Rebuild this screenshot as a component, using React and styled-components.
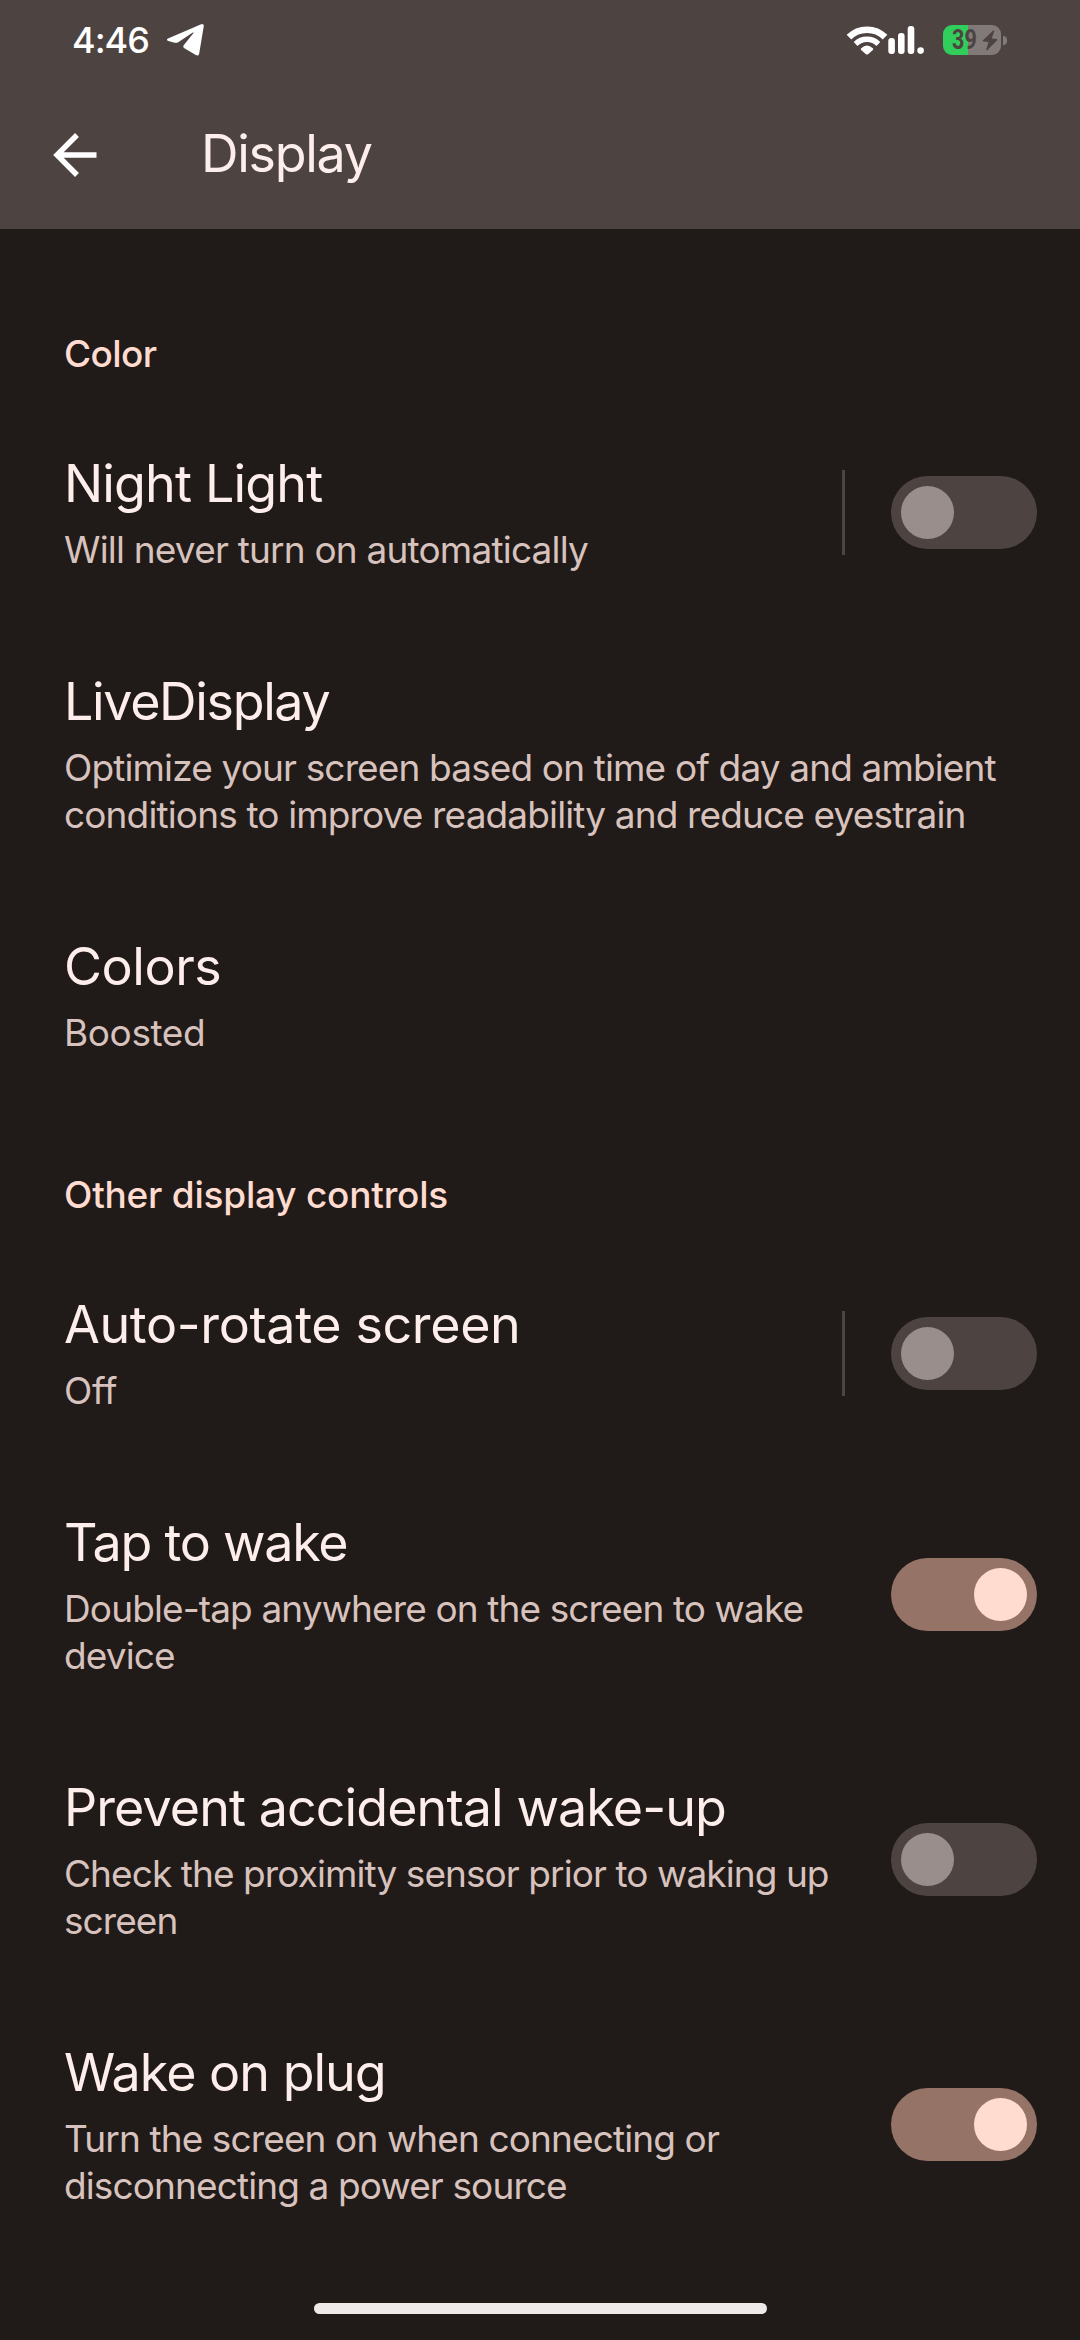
import React from 'react';
import styled, { createGlobalStyle } from 'styled-components';

const color = {
  background: '#201a18',
  bar: '#4d4442',
  text: '#fdeeeb',
  summary: '#d8c2bd',
  accent: '#ffdbd0',
  trackOn: '#957467',
  knobOff: '#998e8c',
};

const GlobalStyle = createGlobalStyle`
  *, *::before, *::after { box-sizing: border-box; }
  body {
    margin: 0;
    background: ${color.background};
    font-family: Inter, Roboto, "Liberation Sans", sans-serif;
  }
`;

const Screen = styled.div`
  display: flex;
  flex-direction: column;
  width: 1080px;
  height: 2340px;
  overflow: hidden;
  background: ${color.background};
  color: ${color.text};
`;

const Header = styled.header`
  display: flex;
  flex-direction: column;
  flex: none;
  height: 229px;
  background: ${color.bar};
`;

const StatusBar = styled.div`
  display: flex;
  align-items: center;
  justify-content: space-between;
  height: 80px;
  padding: 0 73px 0 72px;
  color: #fff;
`;

const StatusGroup = styled.div`
  display: flex;
  align-items: center;
  gap: ${(p) => p.$gap}px;
`;

const Clock = styled.span`
  font-size: 36px;
  font-weight: 500;
  line-height: 78px;
  letter-spacing: -1px;
`;

const Glyph = styled.svg`
  display: block;
  flex: none;
  fill: currentColor;
`;

const Battery = styled.div`
  display: flex;
  align-items: center;
  gap: 2px;
`;

const BatteryBody = styled.div`
  display: flex;
  align-items: center;
  justify-content: space-between;
  width: 58px;
  height: 30px;
  padding: 0 3px 0 9px;
  border-radius: 9px;
  background: linear-gradient(to right, #32ce5b 25px, #827a78 25px);
  color: ${color.bar};
`;

const BatteryLevel = styled.span`
  width: 24px;
  font-family: Roboto, "Liberation Sans", sans-serif;
  font-size: 27px;
  font-weight: 700;
  line-height: 30px;
  transform: scaleX(0.8);
  transform-origin: left center;
`;

const BatteryTip = styled.div`
  width: 4px;
  height: 9px;
  border-radius: 0 4px 4px 0;
  background: #827a78;
`;

const Toolbar = styled.div`
  display: flex;
  align-items: center;
  flex: 1;
  padding-left: 53px;
  gap: 103px;
`;

const BackButton = styled.button`
  display: flex;
  padding: 0;
  border: 0;
  background: none;
  color: #fff;
`;

const PageTitle = styled.h1`
  margin: 0;
  font-size: 52px;
  font-weight: 400;
  line-height: 66px;
  letter-spacing: -1.3px;
  padding-bottom: 1px;
`;

const List = styled.main`
  display: flex;
  flex-direction: column;
  flex: 1;
  padding-top: 34px;
`;

const Category = styled.h2`
  margin: 0;
  padding: 67px 64px 25px;
  color: ${color.accent};
  font-size: 37px;
  font-weight: 500;
  line-height: 48px;
  letter-spacing: ${(p) => p.$tracking}px;
`;

const Preference = styled.section`
  display: flex;
  align-items: center;
  padding: 48px 43px 48px 64px;
`;

const Labels = styled.div`
  display: flex;
  flex-direction: column;
  flex: 1;
  gap: 9px;
`;

const Title = styled.h3`
  margin: 0;
  font-size: 52px;
  font-weight: 400;
  line-height: 66px;
  letter-spacing: ${(p) => p.$tracking}px;
`;

const Summary = styled.p`
  margin: 0;
  color: ${color.summary};
  font-size: 37px;
  line-height: 47px;
  letter-spacing: ${(p) => p.$tracking}px;
`;

const Divider = styled.div`
  width: 3px;
  height: 85px;
  margin-right: 46px;
  background: ${color.bar};
`;

const Track = styled.button`
  display: flex;
  align-items: center;
  justify-content: ${(p) => (p.$on ? 'flex-end' : 'flex-start')};
  flex: none;
  width: 146px;
  height: 73px;
  padding: 0 10px;
  border: 0;
  border-radius: 37px;
  background: ${(p) => (p.$on ? color.trackOn : color.bar)};
`;

const Knob = styled.span`
  width: 53px;
  height: 53px;
  border-radius: 50%;
  background: ${(p) => (p.$on ? color.accent : color.knobOff)};
`;

const NavigationBar = styled.footer`
  display: flex;
  justify-content: center;
  flex: none;
  height: 37px;
`;

const HomePill = styled.div`
  width: 453px;
  height: 11px;
  border-radius: 6px;
  background: #eeeaea;
`;

const TelegramIcon = () => (
  <Glyph width="40" height="36" viewBox="0 0 40 36">
    <path d="M2 16.6 34.6 2.4Q38.2 1 37.7 4.6L33.2 31.4Q32.6 34.6 29.8 33.1L18.4 26.3Q16.4 25 17.9 23L27.5 11.1Q27.9 10 26.8 10.6L12.6 20Q10.6 21.2 8.5 20.7L2.4 19.1Q-.3 17.8 2 16.6Z" />
  </Glyph>
);

const WifiIcon = () => (
  <Glyph width="42" height="34" viewBox="0 0 42 34">
    <path d="M3 14.2A25.5 25.5 0 0 1 39 14.2" fill="none" stroke="currentColor" strokeWidth="6.6" />
    <path d="M9.6 21A16.2 16.2 0 0 1 32.4 21" fill="none" stroke="currentColor" strokeWidth="5.4" />
    <path d="M15.2 25.3Q21 19.8 26.8 25.3 27.8 26 26.9 26.9L22.3 31Q21 32.2 19.7 31L15.1 26.9Q14.2 26 15.2 25.3Z" />
  </Glyph>
);

const SignalIcon = () => (
  <Glyph width="37" height="30" viewBox="0 0 37 30">
    <rect x="0.3" y="13" width="6.6" height="16" rx="3" />
    <rect x="10" y="8" width="6.6" height="21" rx="3" />
    <rect x="19.7" y="1" width="6.6" height="28" rx="3" />
    <circle cx="32.6" cy="25.6" r="3.3" />
  </Glyph>
);

const BoltIcon = () => (
  <Glyph width="16" height="21" viewBox="0 0 16 21">
    <path d="M11.2.6.9 10.2Q.1 11.3 1.4 11.5L6.6 12 4.2 19.6Q4.2 20.8 5.2 20.2L15.2 10.3Q15.9 9.3 14.7 9.1L9.7 8.6 12.2 1.4Q12.2.2 11.2.6Z" />
  </Glyph>
);

const ArrowIcon = () => (
  <Glyph width="45" height="44" viewBox="0 0 45 44">
    <path d="M24 2 4 22 24 42M4 22H43.5" fill="none" stroke="currentColor" strokeWidth="5.4" />
  </Glyph>
);

const Switch = ({ on }) => (
  <Track type="button" role="switch" aria-checked={on} $on={on}>
    <Knob $on={on} />
  </Track>
);

const sections = [
  {
    name: 'Color',
    tracking: -0.6,
    items: [
      { title: 'Night Light', tracking: -0.85, summary: 'Will never turn on automatically', summaryTracking: -0.8, on: false, split: true },
      {
        title: 'LiveDisplay',
        tracking: -1.35,
        summary: 'Optimize your screen based on time of day and ambient conditions to improve readability and reduce eyestrain',
        summaryTracking: -0.86,
      },
      { title: 'Colors', tracking: -0.45, summary: 'Boosted', summaryTracking: -0.4 },
    ],
  },
  {
    name: 'Other display controls',
    tracking: -0.22,
    items: [
      { title: 'Auto-rotate screen', tracking: -0.38, summary: 'Off', summaryTracking: -0.4, on: false, split: true },
      { title: 'Tap to wake', tracking: -1.25, summary: 'Double-tap anywhere on the screen to wake device', on: true },
      { title: 'Prevent accidental wake-up', tracking: -0.92, summary: 'Check the proximity sensor prior to waking up screen', summaryTracking: -0.92, on: false },
      { title: 'Wake on plug', tracking: -1, summary: 'Turn the screen on when connecting or disconnecting a power source', on: true },
    ],
  },
];

export default function App() {
  return (
    <>
      <GlobalStyle />
      <Screen>
        <Header>
          <StatusBar>
            <StatusGroup $gap={17}>
              <Clock>4:46</Clock>
              <TelegramIcon />
            </StatusGroup>
            <StatusGroup $gap={18}>
              <StatusGroup $gap={0}>
                <WifiIcon />
                <SignalIcon />
              </StatusGroup>
              <Battery>
                <BatteryBody>
                  <BatteryLevel>39</BatteryLevel>
                  <BoltIcon />
                </BatteryBody>
                <BatteryTip />
              </Battery>
            </StatusGroup>
          </StatusBar>
          <Toolbar>
            <BackButton type="button" aria-label="Back">
              <ArrowIcon />
            </BackButton>
            <PageTitle>Display</PageTitle>
          </Toolbar>
        </Header>
        <List>
          {sections.map((section) => (
            <React.Fragment key={section.name}>
              <Category $tracking={section.tracking}>{section.name}</Category>
              {section.items.map((item) => (
                <Preference key={item.title}>
                  <Labels>
                    <Title $tracking={item.tracking}>{item.title}</Title>
                    <Summary $tracking={item.summaryTracking ?? -0.88}>{item.summary}</Summary>
                  </Labels>
                  {item.split && <Divider />}
                  {item.on !== undefined && <Switch on={item.on} />}
                </Preference>
              ))}
            </React.Fragment>
          ))}
        </List>
        <NavigationBar>
          <HomePill />
        </NavigationBar>
      </Screen>
    </>
  );
}
